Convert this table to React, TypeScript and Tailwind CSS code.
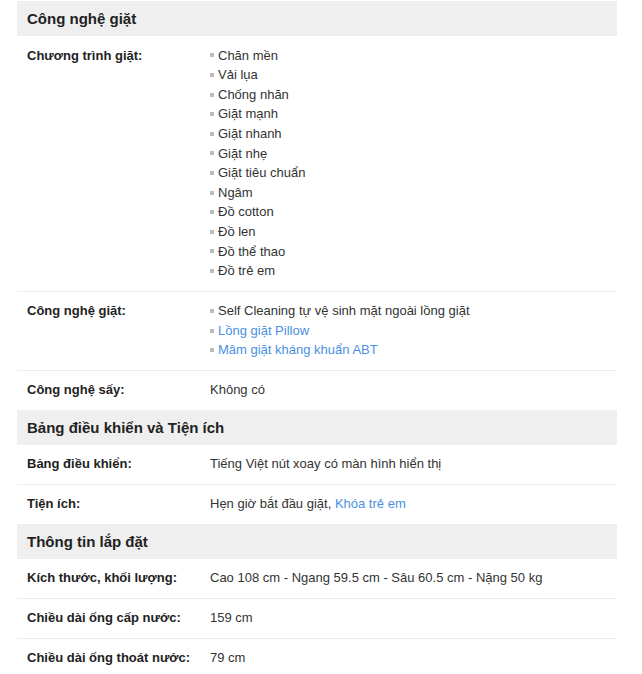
type Item = { text: string; link?: boolean };
type Row = { label: string; list?: Item[]; value?: React.ReactNode };
type Section = { title: string; rows: Row[] };

const programs = [
  "Chăn mền",
  "Vải lụa",
  "Chống nhăn",
  "Giặt mạnh",
  "Giặt nhanh",
  "Giặt nhẹ",
  "Giặt tiêu chuẩn",
  "Ngâm",
  "Đồ cotton",
  "Đồ len",
  "Đồ thể thao",
  "Đồ trẻ em",
];

const sections: Section[] = [
  {
    title: "Công nghệ giặt",
    rows: [
      { label: "Chương trình giặt:", list: programs.map((text) => ({ text })) },
      {
        label: "Công nghệ giặt:",
        list: [
          { text: "Self Cleaning tự vệ sinh mặt ngoài lồng giặt" },
          { text: "Lồng giặt Pillow", link: true },
          { text: "Mâm giặt kháng khuẩn ABT", link: true },
        ],
      },
      { label: "Công nghệ sấy:", value: "Không có" },
    ],
  },
  {
    title: "Bảng điều khiển và Tiện ích",
    rows: [
      { label: "Bảng điều khiển:", value: "Tiếng Việt nút xoay có màn hình hiển thị" },
      {
        label: "Tiện ích:",
        value: (
          <>
            Hẹn giờ bắt đầu giặt, <a className="text-[#4a90e2]">Khóa trẻ em</a>
          </>
        ),
      },
    ],
  },
  {
    title: "Thông tin lắp đặt",
    rows: [
      { label: "Kích thước, khối lượng:", value: "Cao 108 cm - Ngang 59.5 cm - Sâu 60.5 cm - Nặng 50 kg" },
      { label: "Chiều dài ống cấp nước:", value: "159 cm" },
      { label: "Chiều dài ống thoát nước:", value: "79 cm" },
    ],
  },
];

export default function App() {
  return (
    <div className="min-h-[674px] bg-white pt-px font-['Liberation_Sans',Arial,sans-serif] text-[13px] leading-[19.6px] text-[#333]">
      <div className="ml-[17px] w-[600px]">
        {sections.map((s) => (
          <div key={s.title}>
            <h3 className="bg-[#efefef] px-[10px] py-[7px] text-[15px] leading-[21px] font-bold text-[#222]">
              {s.title}
            </h3>
            {s.rows.map((r, i) => (
              <div
                key={r.label}
                className={`flex px-[10px] py-[9.7px] ${i < s.rows.length - 1 ? "border-b border-[#eee]" : ""}`}
              >
                <div className="w-[183px] shrink-0 font-bold text-[#222]">{r.label}</div>
                <div className="flex-1">
                  {r.list ? (
                    <ul>
                      {r.list.map((it) => (
                        <li key={it.text} className="flex items-center">
                          <span className="mr-[4px] h-[4px] w-[4px] bg-[#bbb]" />
                          <span className={it.link ? "text-[#4a90e2]" : ""}>{it.text}</span>
                        </li>
                      ))}
                    </ul>
                  ) : (
                    r.value
                  )}
                </div>
              </div>
            ))}
          </div>
        ))}
      </div>
    </div>
  );
}
